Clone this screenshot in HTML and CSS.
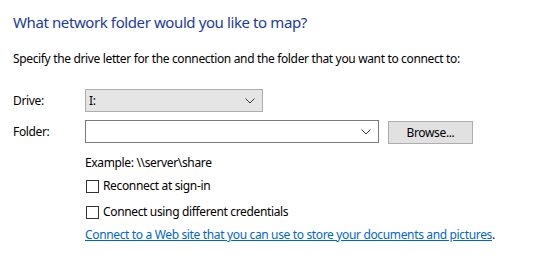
FILE: index.html
```html
<!DOCTYPE html>
<html>
<head>
    <title>Map Network Drive</title>
    <link rel="stylesheet" href="styles.css">
</head>
<body>
    <div class="wizard">
        <h1 class="main-title">What network folder would you like to map?</h1>
        <p class="intro">Specify the drive letter for the connection and the folder that you want to connect to:</p>

        <div class="form-row drive-row">
            <span class="field-label">Drive:</span>
            <div class="combo combo-drive">
                <span class="combo-value">I:</span>
                <svg class="chevron" width="10" height="6" viewBox="0 0 10 6"><polyline points="0.5,0.5 5,5 9.5,0.5" fill="none" stroke="#333" stroke-width="1"/></svg>
            </div>
        </div>

        <div class="form-row folder-row">
            <span class="field-label">Folder:</span>
            <div class="combo combo-folder">
                <span class="combo-value"></span>
                <svg class="chevron" width="10" height="6" viewBox="0 0 10 6"><polyline points="0.5,0.5 5,5 9.5,0.5" fill="none" stroke="#333" stroke-width="1"/></svg>
            </div>
            <button class="browse-btn">Browse...</button>
        </div>

        <div class="options">
            <div class="example">Example: \\server\share</div>
            <label class="check-row first-check"><span class="check-box"></span>Reconnect at sign-in</label>
            <label class="check-row"><span class="check-box"></span>Connect using different credentials</label>
            <div class="web-link"><a href="#">Connect to a Web site that you can use to store your documents and pictures</a>.</div>
        </div>
    </div>
</body>
</html>
```

FILE: styles.css
```css
body {
    margin: 0;
    background-color: #ffffff;
    color: #000000;
    font-family: "Noto Sans", "Open Sans", sans-serif;
    font-size: 12px;
    letter-spacing: -0.35px;
}

.wizard {
    padding: 11px 13px;
}

.main-title {
    margin: 0;
    font-size: 15px;
    font-weight: normal;
    line-height: 22px;
    letter-spacing: -0.4px;
    color: #1b3b9e;
}

.intro {
    margin: 18px 0 0 0;
    line-height: 16px;
}

.form-row {
    display: flex;
    align-items: center;
}

.drive-row {
    margin-top: 22px;
}

.folder-row {
    margin-top: 7px;
}

.field-label {
    width: 72px;
}

.combo {
    display: flex;
    align-items: center;
    justify-content: space-between;
    box-sizing: border-box;
    height: 23px;
    padding: 0 7px 0 3px;
    border: 1px solid #adadad;
}

.combo-drive {
    width: 178px;
    background-color: #e5e5e5;
}

.combo-folder {
    width: 294px;
    background-color: #ffffff;
    border-color: #7a7a7a;
}

.browse-btn {
    box-sizing: border-box;
    width: 85px;
    height: 23px;
    margin: 2px 0 0 9px;
    padding: 0;
    font-family: inherit;
    font-size: 12px;
    letter-spacing: -0.35px;
    color: #000000;
    background-color: #e1e1e1;
    border: 1px solid #adadad;
}

.options {
    margin-left: 72px;
}

.example {
    margin-top: 11px;
    line-height: 16px;
}

.check-row {
    display: flex;
    align-items: center;
    margin-top: 10px;
    line-height: 16px;
}

.first-check {
    margin-top: 7px;
}

.check-box {
    box-sizing: border-box;
    width: 13px;
    height: 13px;
    margin: 0 4px 0 1px;
    border: 1px solid #333333;
    background-color: #ffffff;
}

.web-link {
    margin-top: 7px;
    line-height: 16px;
}

.web-link a {
    color: #0066cc;
}
```
